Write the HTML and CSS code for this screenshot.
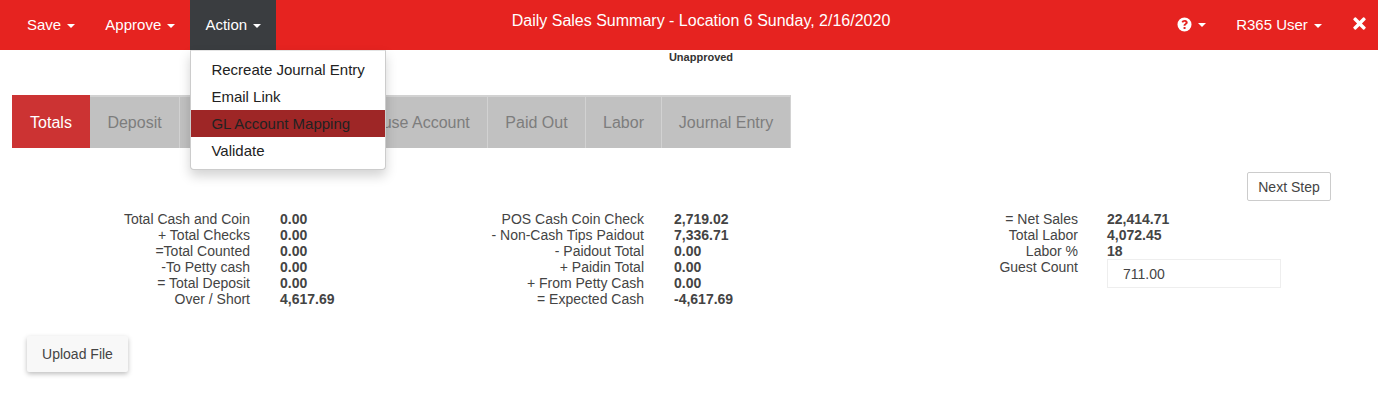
FILE: index.html
```html
<!DOCTYPE html>
<html lang="en">
    <head>
        <meta charset="utf-8">
        <title>Daily Sales Summary</title>
        <link rel="stylesheet" href="styles.css">
    </head>
    <body>
        <div class="navbar">
            <div class="nav-left">
                <a class="nav-item" href="#">Save <span class="caret"></span></a>
                <a class="nav-item" href="#">Approve <span class="caret"></span></a>
                <div class="nav-drop">
                    <a class="nav-item active" href="#">Action <span class="caret"></span></a>
                    <ul class="menu">
                        <li><a href="#">Recreate Journal Entry</a></li>
                        <li><a href="#">Email Link</a></li>
                        <li class="selected"><a href="#">GL Account Mapping</a></li>
                        <li><a href="#">Validate</a></li>
                    </ul>
                </div>
            </div>
            <div class="nav-title">Daily Sales Summary - Location 6 Sunday, 2/16/2020</div>
            <div class="nav-right">
                <a class="nav-item help" href="#">
                    <svg class="help-icon" viewBox="0 0 16 16" width="15" height="15">
                        <path fill="#fff" fill-rule="evenodd" d="M8 .5a7.500 7.500 0 1 0 0 15 7.500 7.500 0 0 0 0-15zM7 10.600h2.100v2.100H7zM8.200 3.300c-1.700 0-2.800.8-3.300 2l1.600.9c.3-.7.8-1.100 1.600-1.100.7 0 1.100.3 1.100.8 0 .5-.4.8-1 1.200-.8.5-1.200 1-1.200 2v.3h2.100v-.2c0-.5.2-.7.8-1.100.9-.6 1.500-1.200 1.500-2.300 0-1.500-1.300-2.500-2.700-2.500z"/>
                    </svg>
                    <span class="caret"></span>
                </a>
                <a class="nav-item user" href="#">R365 User <span class="caret"></span></a>
                <a class="nav-close" href="#">
                    <svg viewBox="0 0 14 14" width="13" height="13">
                        <path fill="#fff" d="M3.200.6 7 4.400 10.800.6a1 1 0 0 1 1.400 0l1.200 1.200a1 1 0 0 1 0 1.400L9.600 7l3.800 3.800a1 1 0 0 1 0 1.400l-1.200 1.200a1 1 0 0 1-1.400 0L7 9.600l-3.800 3.800a1 1 0 0 1-1.400 0L.6 12.200a1 1 0 0 1 0-1.400L4.400 7 .6 3.200a1 1 0 0 1 0-1.400L1.800.6a1 1 0 0 1 1.400 0z"/>
                    </svg>
                </a>
            </div>
        </div>

        <div class="status">Unapproved</div>

        <div class="tabs">
            <a class="tab current" href="#">Totals</a>
            <a class="tab" href="#">Deposit</a>
            <a class="tab" href="#"></a>
            <a class="tab" href="#">House Account</a>
            <a class="tab" href="#">Paid Out</a>
            <a class="tab" href="#">Labor</a>
            <a class="tab" href="#">Journal Entry</a>
        </div>

        <div class="step-row">
            <button class="btn-step">Next Step</button>
        </div>

        <div class="stats">
            <div class="stat-col first">
                <span>Total Cash and Coin</span><b>0.00</b>
                <span>+ Total Checks</span><b>0.00</b>
                <span>=Total Counted</span><b>0.00</b>
                <span>-To Petty cash</span><b>0.00</b>
                <span>= Total Deposit</span><b>0.00</b>
                <span>Over / Short</span><b>4,617.69</b>
            </div>
            <div class="stat-col second">
                <span>POS Cash Coin Check</span><b>2,719.02</b>
                <span>- Non-Cash Tips Paidout</span><b>7,336.71</b>
                <span>- Paidout Total</span><b>0.00</b>
                <span>+ Paidin Total</span><b>0.00</b>
                <span>+ From Petty Cash</span><b>0.00</b>
                <span>= Expected Cash</span><b>-4,617.69</b>
            </div>
            <div class="stat-col third">
                <span>= Net Sales</span><b>22,414.71</b>
                <span>Total Labor</span><b>4,072.45</b>
                <span>Labor %</span><b>18</b>
                <span>Guest Count</span><input class="guest" type="text" value="711.00">
            </div>
        </div>

        <button class="btn-upload">Upload File</button>
    </body>
</html>
```

FILE: styles.css
```css
html, body {
    margin: 0;
    padding: 0;
}

body {
    height: 405px;
    overflow: hidden;
    background: #fff;
    color: #444;
    font-family: "Liberation Sans", Arial, sans-serif;
    font-size: 14px;
}

a {
    color: inherit;
    text-decoration: none;
}

/* top bar */
.navbar {
    position: relative;
    display: flex;
    justify-content: space-between;
    height: 50px;
    background-color: #e62320;
    color: #fff;
    font-size: 15px;
}

.nav-left, .nav-right {
    display: flex;
}

.nav-left {
    padding-left: 12px;
}

.nav-item {
    display: block;
    height: 50px;
    padding: 0 15px;
    line-height: 50px;
    white-space: nowrap;
}

.nav-item.active {
    background-color: #3a3d40;
}

.nav-drop {
    position: relative;
}

.caret {
    display: inline-block;
    width: 0;
    height: 0;
    margin-left: 2px;
    vertical-align: middle;
    border-top: 4px solid #fff;
    border-left: 4px solid transparent;
    border-right: 4px solid transparent;
}

.nav-title {
    position: absolute;
    left: 24px;
    right: 0;
    top: 0;
    line-height: 41px;
    text-align: center;
    font-size: 16px;
    pointer-events: none;
}

.help {
    display: flex;
    align-items: center;
    gap: 6px;
}

.help .caret {
    margin-left: 0;
}

.help-icon {
    margin-top: -2px;
}

.user {
    padding-right: 19px;
}

.nav-close {
    display: flex;
    align-items: center;
    padding: 0 12px 4px 12px;
}

/* Action dropdown */
.menu {
    position: absolute;
    z-index: 10;
    top: 50px;
    left: 0;
    width: 196px;
    margin: 0;
    padding: 5px 0;
    list-style: none;
    background: #fff;
    color: #222;
    border: 1px solid #ccc;
    border-top-color: #e4e4e4;
    border-radius: 0 0 4px 4px;
    box-shadow: 0 6px 12px rgba(0, 0, 0, .175);
    box-sizing: border-box;
}

.menu a {
    display: block;
    padding: 0 20px;
    line-height: 27px;
    white-space: nowrap;
}

.menu .selected {
    background-color: #9e2626;
}

.status {
    height: 45px;
    padding-left: 24px;
    box-sizing: border-box;
    text-align: center;
    font-size: 11px;
    font-weight: bold;
    line-height: 14px;
    color: #333;
}

/* tabs */
.tabs {
    display: grid;
    grid-template-columns: 78px 90px 165px 143px 98px 76px 129px;
    width: 779px;
    height: 53px;
    margin-left: 12px;
    border-top: 2px solid #d2d2d2;
    box-sizing: border-box;
    background: #c1c1c1;
}

.tab {
    box-sizing: border-box;
    line-height: 51px;
    text-align: center;
    font-size: 16px;
    color: #7d7d7d;
    border-right: 1px solid #d2d2d2;
    white-space: nowrap;
}

.tab.current {
    margin-top: -2px;
    padding-top: 2px;
    background: #cc3333;
    color: #fff;
    border-right: 0;
}

.step-row {
    display: flex;
    justify-content: flex-end;
    padding: 24px 47px 0 0;
}

.btn-step {
    width: 84px;
    height: 29px;
    padding: 0;
    background: #fff;
    border: 1px solid #ccc;
    border-radius: 2px;
    color: #444;
    font: 14px "Liberation Sans", Arial, sans-serif;
}

/* figures */
.stats {
    display: grid;
    grid-template-columns: 394px 434px 1fr;
    margin: 10px 0 0 12px;
    line-height: 16px;
    height: 125px;
}

.stat-col {
    display: grid;
    grid-template-columns: 238px auto;
    grid-auto-rows: 16px;
    column-gap: 30px;
    justify-content: start;
}

.stat-col span {
    text-align: right;
}

.stat-col b {
    color: #444;
}

.third {
    column-gap: 29px;
}

.guest {
    width: 174px;
    height: 29px;
    padding: 0 15px;
    box-sizing: border-box;
    background: #fff;
    border: 1px solid #eee;
    color: #444;
    font: 14px "Liberation Sans", Arial, sans-serif;
}

.btn-upload {
    display: block;
    width: 101px;
    height: 36px;
    margin-left: 27px;
    padding: 0;
    background: #f8f8f8;
    border: 0;
    border-radius: 2px;
    box-shadow: 0 2px 5px rgba(0, 0, 0, .26);
    color: #444;
    font: 14px "Liberation Sans", Arial, sans-serif;
}
```
